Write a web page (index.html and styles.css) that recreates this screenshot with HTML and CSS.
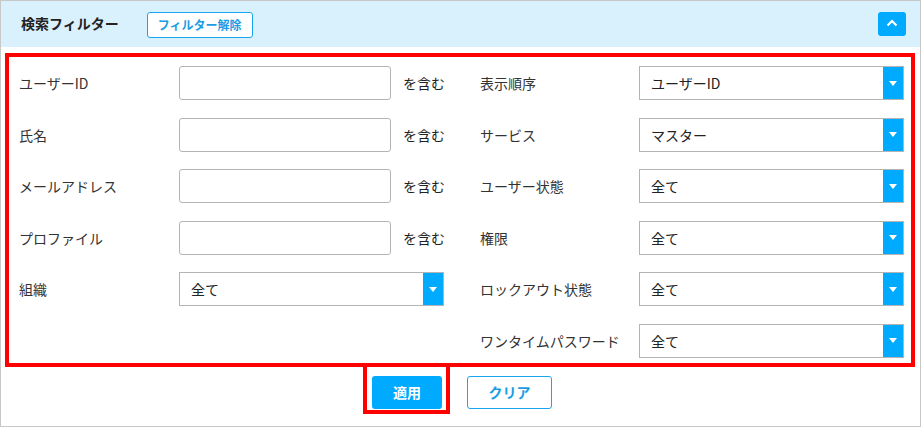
FILE: index.html
```html
<!DOCTYPE html>
<html lang="ja">
<head>
<meta charset="utf-8">
<link rel="stylesheet" href="styles.css">
</head>
<body>
<div class="panel">
  <div class="header">
    <span class="title">検索フィルター</span>
    <button class="btn-reset">フィルター解除</button>
    <button class="btn-collapse" aria-label="閉じる">
      <svg width="12" height="8" viewBox="0 0 12 8"><path d="M1.5 6.5 L6 2 L10.5 6.5" fill="none" stroke="#fff" stroke-width="2.2"/></svg>
    </button>
  </div>
  <div class="filters">
    <div class="col col-left">
      <div class="row"><label class="lbl">ユーザーID</label><input class="txt" type="text"><span class="suffix">を含む</span></div>
      <div class="row"><label class="lbl">氏名</label><input class="txt" type="text"><span class="suffix">を含む</span></div>
      <div class="row"><label class="lbl">メールアドレス</label><input class="txt" type="text"><span class="suffix">を含む</span></div>
      <div class="row"><label class="lbl">プロファイル</label><input class="txt" type="text"><span class="suffix">を含む</span></div>
      <div class="row"><label class="lbl">組織</label><div class="sel"><span class="val">全て</span><span class="arrow"></span></div></div>
    </div>
    <div class="col col-right">
      <div class="row"><label class="lbl">表示順序</label><div class="sel"><span class="val">ユーザーID</span><span class="arrow"></span></div></div>
      <div class="row"><label class="lbl">サービス</label><div class="sel"><span class="val">マスター</span><span class="arrow"></span></div></div>
      <div class="row"><label class="lbl">ユーザー状態</label><div class="sel"><span class="val">全て</span><span class="arrow"></span></div></div>
      <div class="row"><label class="lbl">権限</label><div class="sel"><span class="val">全て</span><span class="arrow"></span></div></div>
      <div class="row"><label class="lbl">ロックアウト状態</label><div class="sel"><span class="val">全て</span><span class="arrow"></span></div></div>
      <div class="row"><label class="lbl">ワンタイムパスワード</label><div class="sel"><span class="val">全て</span><span class="arrow"></span></div></div>
    </div>
  </div>
  <div class="actions">
    <div class="highlight"><button class="btn-apply">適用</button></div>
    <button class="btn-clear">クリア</button>
  </div>
</div>
</body>
</html>
```

FILE: styles.css
```css
* { box-sizing: border-box; }
html, body { margin: 0; padding: 0; background: #fff; }
body {
  font-family: "Noto Sans CJK JP", "Noto Sans", sans-serif;
  font-size: 14px;
  color: #333;
}
.panel {
  width: 921px;
  height: 427px;
  border: 1px solid #c8c8c8;
  background: #fff;
}
.header {
  height: 46px;
  background: #d9f1fd;
  display: flex;
  align-items: center;
  padding: 0 14px 0 20px;
}
.title {
  font-size: 14px;
  font-weight: 700;
  color: #222;
  line-height: 20px;
  margin-top: -2px;
}
.btn-reset {
  margin-left: 28px;
  width: 106px;
  height: 26px;
  border: 1px solid #1aa6ee;
  border-radius: 3px;
  background: #fff;
  color: #1a9de4;
  font-family: inherit;
  font-size: 12px;
  font-weight: 700;
  padding: 0;
  line-height: 24px;
  margin-top: 2px;
}
.btn-collapse {
  margin-left: auto;
  width: 28px;
  height: 24px;
  border: 0;
  border-radius: 3px;
  background: #00aaff;
  display: flex;
  align-items: center;
  justify-content: center;
  padding: 0 0 2px 0;
}
.btn-collapse svg { display: block; }
.filters {
  margin: 6px 0 0 4px;
  width: 910px;
  border: 4px solid #ff0000;
  padding: 9px 7px 5px 10px;
  display: flex;
  column-gap: 36px;
}
.col {
  display: flex;
  flex-direction: column;
  row-gap: 17.5px;
}
.col-left { width: 425px; flex: none; }
.col-right { width: 424px; flex: none; }
.row {
  height: 34px;
  display: flex;
  align-items: center;
}
.lbl {
  flex: none;
  width: 160px;
  color: #333;
  line-height: 20px;
  white-space: nowrap;
}
.col-right .lbl { width: 159px; }
.txt {
  flex: none;
  width: 212px;
  height: 34px;
  border: 1px solid #b4b4b4;
  border-radius: 3px;
  background: #fff;
  margin: 0;
  padding: 0 8px;
  font-family: inherit;
  font-size: 14px;
}
.suffix {
  flex: none;
  margin-left: 12px;
  color: #222;
  line-height: 20px;
  white-space: nowrap;
}
.sel {
  flex: none;
  width: 265px;
  height: 34px;
  border: 1px solid #b4b4b4;
  display: flex;
  align-items: stretch;
  background: #fff;
}
.val {
  flex: 1;
  padding-left: 11px;
  display: flex;
  align-items: center;
  color: #222;
  line-height: 20px;
}
.arrow {
  width: 20px;
  background: #00aaff;
  display: flex;
  align-items: center;
  justify-content: center;
}
.arrow::after {
  content: "";
  width: 0;
  height: 0;
  border-left: 4px solid transparent;
  border-right: 4px solid transparent;
  border-top: 5px solid #fff;
}
.actions {
  display: flex;
  justify-content: center;
  align-items: flex-start;
  column-gap: 17px;
  padding-right: 6px;
  margin-top: -4px;
}
.highlight {
  border: 4px solid #ff0000;
  padding: 9px 4px 1px 5px;
}
.btn-apply {
  display: block;
  width: 70px;
  height: 33px;
  border: 0;
  border-radius: 3px;
  background: #00aaff;
  color: #fff;
  font-family: inherit;
  font-size: 14px;
  font-weight: 700;
  padding: 0;
}
.btn-clear {
  margin-top: 13px;
  width: 85px;
  height: 33px;
  border: 1px solid #1aa6ee;
  border-radius: 3px;
  background: #fff;
  color: #1a9de4;
  font-family: inherit;
  font-size: 14px;
  font-weight: 700;
  padding: 0;
}
```
